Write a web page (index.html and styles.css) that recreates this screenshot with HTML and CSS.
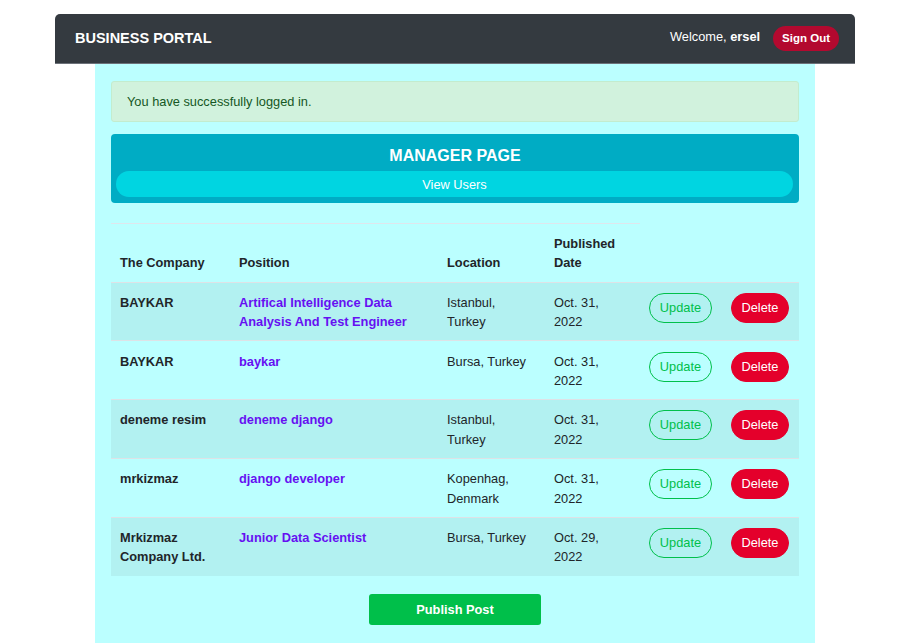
FILE: index.html
```html
<!DOCTYPE html>
<html>
<head>
<meta charset="utf-8">
<link rel="stylesheet" href="styles.css">
</head>
<body>
<div class="page">
  <nav class="navbar">
    <div class="brand">BUSINESS PORTAL</div>
    <div class="user">
      <span class="welcome">Welcome, <b>ersel</b></span>
      <a class="signout">Sign Out</a>
    </div>
  </nav>
  <main class="container">
    <div class="alert">You have successfully logged in.</div>
    <section class="manager">
      <h2 class="manager-title">MANAGER PAGE</h2>
      <a class="view-users">View Users</a>
    </section>
    <table class="jobs">
      <colgroup>
        <col class="c1"><col class="c2"><col class="c3"><col class="c4"><col class="c5"><col class="c6">
      </colgroup>
      <thead>
        <tr><th>The Company</th><th>Position</th><th>Location</th><th>Published<br>Date</th><td class="empty"></td><td class="empty"></td></tr>
      </thead>
      <tbody>
        <tr>
          <td class="co">BAYKAR</td>
          <td><a class="pos">Artifical Intelligence Data Analysis And Test Engineer</a></td>
          <td>Istanbul,<br>Turkey</td>
          <td>Oct. 31,<br>2022</td>
          <td><a class="btn-update">Update</a></td>
          <td><a class="btn-delete">Delete</a></td>
        </tr>
        <tr>
          <td class="co">BAYKAR</td>
          <td><a class="pos">baykar</a></td>
          <td>Bursa, Turkey</td>
          <td>Oct. 31,<br>2022</td>
          <td><a class="btn-update">Update</a></td>
          <td><a class="btn-delete">Delete</a></td>
        </tr>
        <tr>
          <td class="co">deneme resim</td>
          <td><a class="pos">deneme django</a></td>
          <td>Istanbul,<br>Turkey</td>
          <td>Oct. 31,<br>2022</td>
          <td><a class="btn-update">Update</a></td>
          <td><a class="btn-delete">Delete</a></td>
        </tr>
        <tr>
          <td class="co">mrkizmaz</td>
          <td><a class="pos">django developer</a></td>
          <td>Kopenhag,<br>Denmark</td>
          <td>Oct. 31,<br>2022</td>
          <td><a class="btn-update">Update</a></td>
          <td><a class="btn-delete">Delete</a></td>
        </tr>
        <tr>
          <td class="co">Mrkizmaz<br>Company Ltd.</td>
          <td><a class="pos">Junior Data Scientist</a></td>
          <td>Bursa, Turkey</td>
          <td>Oct. 29,<br>2022</td>
          <td><a class="btn-update">Update</a></td>
          <td><a class="btn-delete">Delete</a></td>
        </tr>
      </tbody>
    </table>
    <div class="publish-wrap"><a class="publish">Publish Post</a></div>
  </main>
</div>
</body>
</html>
```
FILE: styles.css
```css
html, body {
  margin: 0;
  padding: 0;
  background: #ffffff;
  font-family: "Liberation Sans", Arial, sans-serif;
  font-size: 12.8px;
  line-height: 1.5;
  color: #212529;
  overflow: hidden;
}
.page {
  padding-top: 14px;
  margin-left: 55px;
  width: 800px;
}
.navbar {
  height: 50px;
  background: #343a40;
  border-radius: 5px 5px 0 0;
  box-sizing: border-box;
  border-bottom: 1px solid #6c7179;
  display: flex;
  align-items: center;
  justify-content: space-between;
  padding: 0 16px 0 20px;
}
.brand {
  color: #fff;
  font-weight: bold;
  font-size: 14.5px;
  margin-top: 0;
}
.user {
  display: flex;
  align-items: center;
  gap: 13px;
}
.welcome {
  color: #fff;
  font-size: 12.8px;
  margin-top: -3px;
}
.signout {
  background: #b3092f;
  color: #fff;
  font-weight: bold;
  font-size: 11.5px;
  border-radius: 13px;
  padding: 4px 9px;
  line-height: 17px;
}
.container {
  margin-left: 40px;
  width: 720px;
  min-height: 600px;
  background: #bbffff;
  padding: 17px 16px 18px;
  box-sizing: border-box;
}
.alert {
  background: #d1f2dd;
  border: 1px solid #c3ecce;
  color: #155724;
  border-radius: 3px;
  padding: 9px 15px;
  height: 41px;
  box-sizing: border-box;
  line-height: 21px;
}
.manager {
  margin-top: 12px;
  background: #00acc4;
  border-radius: 4px;
  padding: 11px 5px 6px;
  height: 69px;
  box-sizing: border-box;
  text-align: center;
}
.manager-title {
  margin: 0;
  color: #fff;
  font-size: 16px;
  font-weight: bold;
  line-height: 22px;
}
.view-users {
  display: block;
  margin-top: 4px;
  background: #00d5e1;
  color: #fff;
  border-radius: 14px;
  height: 26px;
  line-height: 27px;
  font-size: 12.8px;
  margin-right: 1px;
}
.jobs {
  margin-top: 20px;
  width: 688px;
  border-collapse: collapse;
  table-layout: fixed;
}
.c1 { width: 119px; }
.c2 { width: 208px; }
.c3 { width: 107px; }
.c4 { width: 95px; }
.c5 { width: 82px; }
.c6 { width: 77px; }
.jobs th {
  text-align: left;
  vertical-align: bottom;
  font-weight: bold;
  padding: 9.6px 9px;
  border-top: 1px solid #dfe6ec;
}
.jobs td {
  vertical-align: top;
  padding: 10.2px 9px 9.3px;
  border-top: 1px solid #dee2e6;
}
.jobs thead td.empty {
  border-top: none;
}
.jobs thead tr {
  border-bottom: 1px solid #dee2e6;
}
.jobs tbody tr:nth-child(odd) {
  background: #b2f1f1;
}
.co {
  font-weight: bold;
}
.pos {
  color: #6610f2;
  font-weight: bold;
}
.btn-update, .btn-delete {
  display: inline-block;
  height: 30px;
  line-height: 28px;
  box-sizing: border-box;
  border-radius: 15px;
  font-size: 12.8px;
  text-align: center;
}
.btn-update {
  width: 63px;
  border: 1px solid #00c04b;
  color: #00c04b;
}
.btn-delete {
  width: 58px;
  background: #e4002b;
  border: 1px solid #e4002b;
  color: #fff;
}
.publish-wrap {
  text-align: center;
  margin-top: 18px;
}
.publish {
  display: inline-block;
  width: 172px;
  height: 31px;
  line-height: 31px;
  background: #00bf4a;
  color: #fff;
  font-weight: bold;
  border-radius: 3px;
}
```
